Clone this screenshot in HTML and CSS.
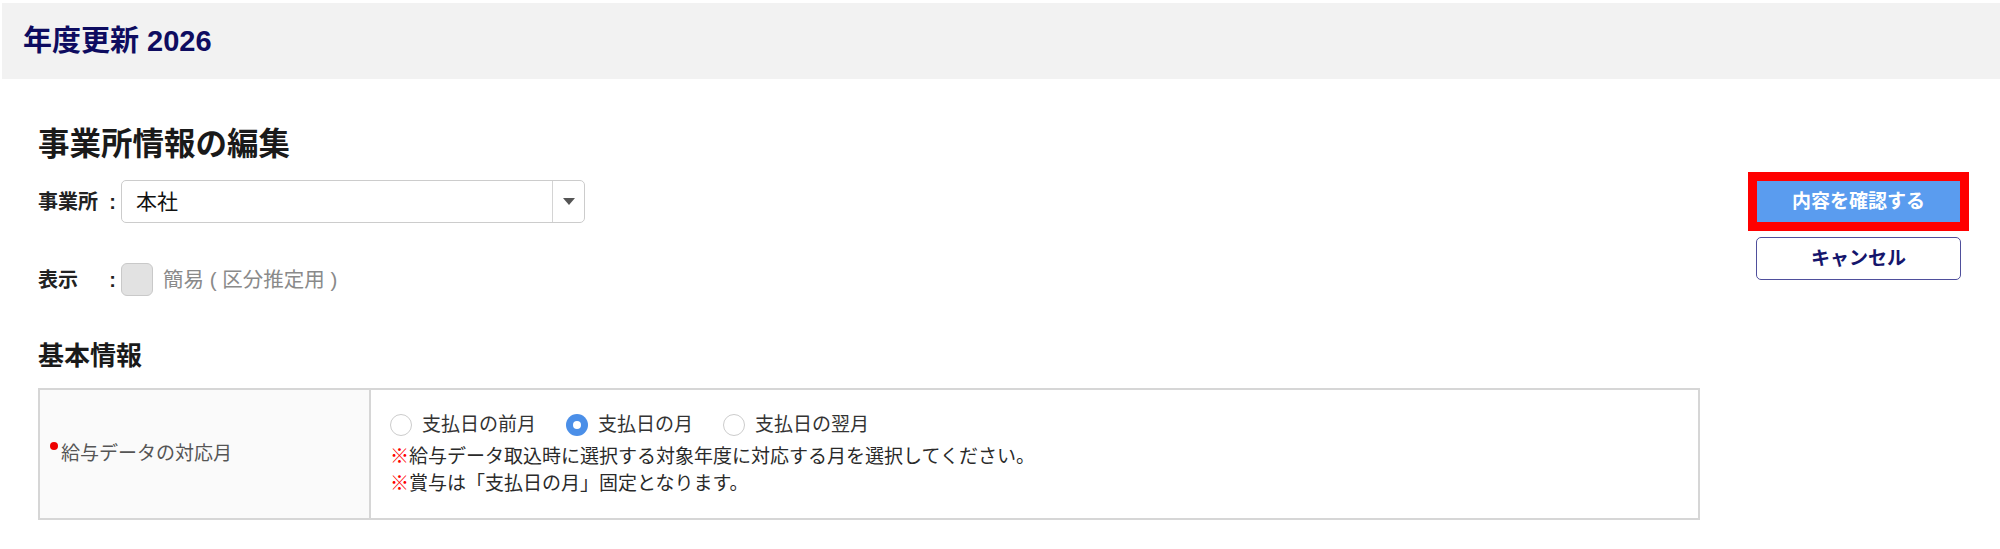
FILE: index.html
```html
<!DOCTYPE html>
<html lang="ja">
<head>
<meta charset="utf-8">
<title>年度更新 2026</title>
<link rel="stylesheet" href="styles.css">
</head>
<body>
<header class="topbar">
  <h1 class="topbar-title">年度更新 2026</h1>
</header>
<div class="page">
  <main class="main">
    <h2 class="heading">事業所情報の編集</h2>
    <div class="field-row">
      <div class="field-label"><span>事業所</span><span class="colon">:</span></div>
      <div class="select">
        <span class="select-value">本社</span>
        <span class="select-arrow"><span class="triangle"></span></span>
      </div>
    </div>
    <div class="field-row display-row">
      <div class="field-label"><span>表示</span><span class="colon">:</span></div>
      <span class="checkbox"></span>
      <span class="check-text">簡易 ( 区分推定用 )</span>
    </div>
    <h3 class="subheading">基本情報</h3>
    <table class="info-table">
      <tr>
        <th class="cell-head"><span class="required-dot"></span>給与データの対応月</th>
        <td class="cell-body">
          <div class="radios">
            <label class="radio-item"><span class="radio"></span>支払日の前月</label>
            <label class="radio-item"><span class="radio checked"></span>支払日の月</label>
            <label class="radio-item"><span class="radio"></span>支払日の翌月</label>
          </div>
          <p class="note"><span class="mark">※</span>給与データ取込時に選択する対象年度に対応する月を選択してください。</p>
          <p class="note"><span class="mark">※</span>賞与は「支払日の月」固定となります。</p>
        </td>
      </tr>
    </table>
  </main>
  <aside class="actions">
    <button class="btn btn-primary">内容を確認する</button>
    <button class="btn btn-cancel">キャンセル</button>
  </aside>
</div>
</body>
</html>
```

FILE: styles.css
```css
* { box-sizing: border-box; }

body {
  margin: 0;
  background: #ffffff;
  color: #333333;
  font-family: "Liberation Sans", "Noto Sans CJK JP", sans-serif;
}

.topbar {
  margin: 3px 0 0 2px;
  height: 76px;
  background: #f2f2f2;
  display: flex;
  align-items: center;
  padding-left: 21px;
}

.topbar-title {
  margin: 0;
  font-size: 29px;
  line-height: 32px;
  font-weight: bold;
  color: #0e0c60;
}

.page {
  display: flex;
  gap: 56px;
  padding: 0 39px 0 38px;
}

.main {
  flex: 1;
  min-width: 0;
}

.heading {
  margin: 49px 0 0 0;
  font-size: 31.5px;
  line-height: 32px;
  font-weight: bold;
  color: #1a1a1a;
}

.field-row {
  display: flex;
  align-items: center;
  margin-top: 20px;
  height: 43px;
}

.display-row {
  margin-top: 40px;
  height: 33px;
}

.field-label {
  width: 83px;
  flex: none;
  display: flex;
  justify-content: space-between;
  padding-right: 5px;
  font-size: 20px;
  line-height: 24px;
  font-weight: bold;
  color: #222222;
}

.colon {
  font-weight: bold;
  width: 7px;
  text-align: center;
}

.select {
  width: 464px;
  height: 43px;
  border: 1px solid #cccccc;
  border-radius: 5px;
  background: #ffffff;
  display: flex;
  align-items: center;
}

.select-value {
  flex: 1;
  padding-left: 14px;
  font-size: 21px;
  line-height: 24px;
  color: #111111;
}

.select-arrow {
  width: 32px;
  align-self: stretch;
  border-left: 1px solid #d4d4d4;
  display: flex;
  align-items: center;
  justify-content: center;
}

.triangle {
  width: 0;
  height: 0;
  border-left: 6px solid transparent;
  border-right: 6px solid transparent;
  border-top: 7px solid #555555;
}

.checkbox {
  width: 32px;
  height: 33px;
  border: 1px solid #c9c9c9;
  border-radius: 6px;
  background: #e2e2e2;
  flex: none;
}

.check-text {
  margin-left: 10px;
  font-size: 20.5px;
  line-height: 24px;
  color: #8a8a8a;
}

.subheading {
  margin: 47px 0 0 0;
  font-size: 26px;
  line-height: 26px;
  font-weight: bold;
  color: #1a1a1a;
}

.info-table {
  margin-top: 19px;
  width: 100%;
  border-collapse: collapse;
  border: 2px solid #d6d6d6;
}

.info-table tr {
  height: 130px;
}

.cell-head {
  width: 331px;
  background: #fafafa;
  border: 2px solid #d6d6d6;
  text-align: left;
  vertical-align: middle;
  font-weight: normal;
  font-size: 19px;
  line-height: 24px;
  color: #555555;
  padding: 0 0 0 21px;
  position: relative;
}

.required-dot {
  position: absolute;
  left: 10px;
  top: 52px;
  width: 8px;
  height: 8px;
  border-radius: 50%;
  background: #ee0000;
}

.cell-body {
  border: 2px solid #d6d6d6;
  vertical-align: middle;
  padding: 0 19px;
  background: #ffffff;
}

.radios {
  display: flex;
  align-items: center;
  gap: 30px;
  height: 28px;
  margin-bottom: 4px;
}

.radio-item {
  display: flex;
  align-items: center;
  gap: 10px;
  font-size: 19px;
  line-height: 24px;
  color: #333333;
}

.radio {
  width: 22px;
  height: 22px;
  border-radius: 50%;
  border: 1.5px solid #cccccc;
  background: #ffffff;
  display: flex;
  align-items: center;
  justify-content: center;
}

.radio.checked {
  border: none;
  background: #4b8fe8;
}

.radio.checked::after {
  content: "";
  width: 8px;
  height: 8px;
  border-radius: 50%;
  background: #ffffff;
}

.note {
  margin: 0;
  font-size: 19px;
  line-height: 27px;
  color: #2a2a2a;
}

.mark {
  color: #ff0000;
}

.actions {
  width: 205px;
  flex: none;
  padding-top: 102px;
  display: flex;
  flex-direction: column;
  align-items: center;
}

.btn {
  font-family: "Liberation Sans", "Noto Sans CJK JP", sans-serif;
  font-weight: bold;
  font-size: 19px;
  line-height: 22px;
  cursor: pointer;
}

.btn-primary {
  width: 203px;
  height: 41px;
  border: none;
  background: #5a9cef;
  color: #ffffff;
  outline: 9px solid #ff0000;
}

.btn-cancel {
  margin-top: 15px;
  width: 205px;
  height: 43px;
  border: 1.5px solid #4f4f9c;
  border-radius: 5px;
  background: #ffffff;
  color: #15156c;
}
```
